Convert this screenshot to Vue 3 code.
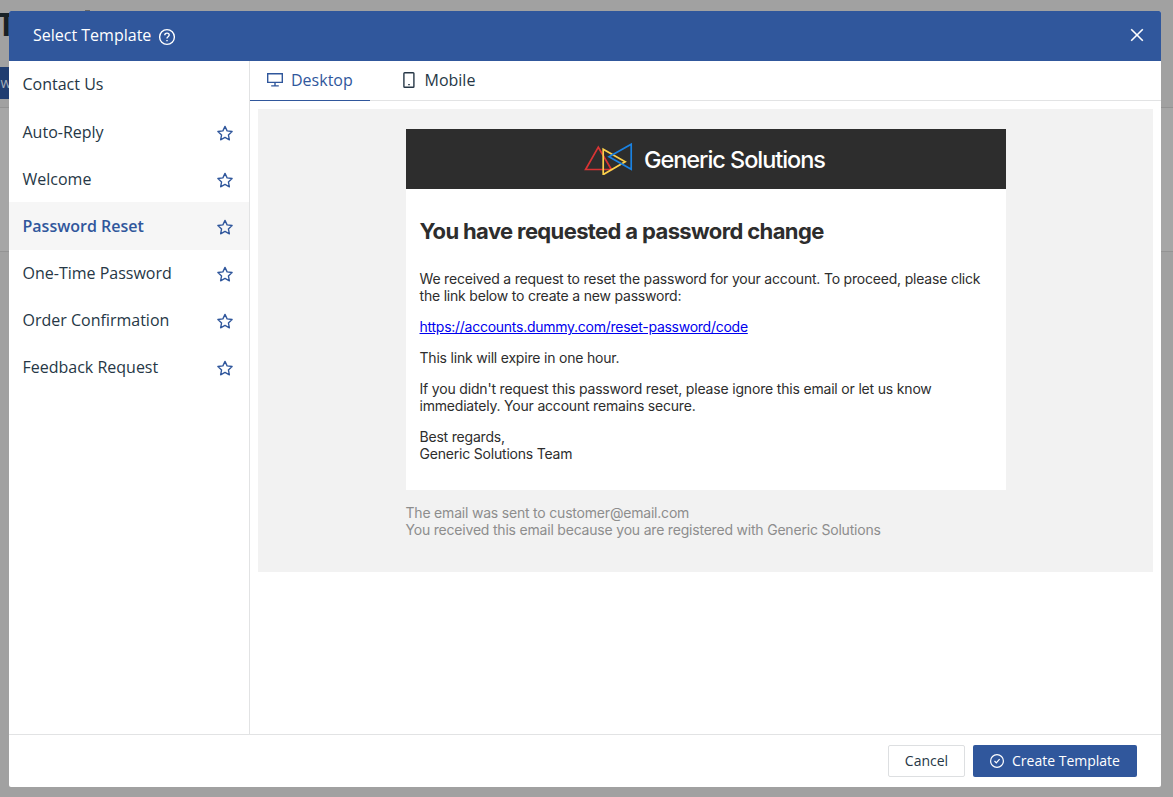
<script setup>
const templates = [
  { name: 'Contact Us', star: false },
  { name: 'Auto-Reply', star: true },
  { name: 'Welcome', star: true },
  { name: 'Password Reset', star: true, selected: true },
  { name: 'One-Time Password', star: true },
  { name: 'Order Confirmation', star: true },
  { name: 'Feedback Request', star: true },
]
</script>

<template>
  <div class="page">
    <div class="behind" aria-hidden="true">
      <div class="behind-title">T</div>
      <div class="behind-mark"></div>
      <div class="behind-tab">ow</div>
      <div class="behind-panel"></div>
    </div>
    <section class="dialog">
      <header class="head">
        <span class="head-title">Select Template</span>
        <svg class="help" width="18" height="18" viewBox="0 0 18 18" fill="none" stroke="currentColor" stroke-width="1.4">
          <circle cx="9" cy="9" r="7.4" />
          <path d="M6.8 7.2C6.8 5.8 7.8 5.1 9 5.1s2.2.8 2.2 2c0 1.6-2.2 1.7-2.2 3.3" />
          <path d="M9 11.9v1.4" />
        </svg>
        <svg class="close" width="14" height="14" viewBox="0 0 14 14" fill="none" stroke="currentColor" stroke-width="1.6">
          <path d="M1.2 1.2l11.6 11.6M12.8 1.2L1.2 12.8" />
        </svg>
      </header>
      <div class="main">
        <nav class="list">
          <div v-for="t in templates" :key="t.name" class="row" :class="{ selected: t.selected, plain: !t.star }">
            <span>{{ t.name }}</span>
            <svg v-if="t.star" class="star" width="16" height="16" viewBox="0 0 16 16" fill="none" stroke="currentColor" stroke-width="1.35" stroke-linejoin="round">
              <path d="M8 1.4l2.1 4.5 5 .6-3.7 3.4 1 4.9L8 12.4l-4.4 2.4 1-4.9L.9 6.5l5-.6z" />
            </svg>
          </div>
        </nav>
        <div class="content">
          <div class="tabs">
            <div class="tab active">
              <svg width="16" height="14" viewBox="0 0 16 14" fill="none" stroke="currentColor" stroke-width="1.4">
                <path d="M.7.7h14.6v8.7H.7zM8 9.4V13M4.2 12.9h7.6" />
              </svg>
              <span>Desktop</span>
            </div>
            <div class="tab mobile">
              <svg width="12" height="16" viewBox="0 0 12 16" fill="none" stroke="currentColor" stroke-width="1.4">
                <rect x=".9" y=".7" width="10" height="14.6" rx=".8" />
                <path d="M5.2 12.6h1.6" />
              </svg>
              <span>Mobile</span>
            </div>
          </div>
          <div class="preview">
            <div class="brand">
              <svg class="logo" width="50" height="36" viewBox="0 0 50 36" fill="none" stroke-width="1.7">
                <path stroke="#d93434" d="M14.3 8.2L27.4 30.5H1.6z" />
                <path stroke="#fcd04b" d="M19.2 10.2v25.4l22-12.8z" />
                <path stroke="#1a82e2" d="M47.2 5.2v25L25 17.8z" />
              </svg>
              <span class="brand-name">Generic Solutions</span>
            </div>
            <article class="mail">
              <h1>You have requested a password change</h1>
              <p>We received a request to reset the password for your account. To proceed, please click<br>the link below to create a new password:</p>
              <p><a>https://accounts.dummy.com/reset-password/code</a></p>
              <p>This link will expire in one hour.</p>
              <p><span class="loose">If you didn't request this password reset, please ignore this email or let us know</span><br>immediately. Your account remains secure.</p>
              <p>Best regards,<br>Generic Solutions Team</p>
            </article>
            <div class="note">The email was sent to customer@email.com<br>You received this email because you are registered with Generic Solutions</div>
          </div>
        </div>
      </div>
      <footer class="foot">
        <button class="btn cancel"><span>Cancel</span></button>
        <button class="btn create">
          <svg width="14" height="14" viewBox="0 0 14 14" fill="none" stroke="currentColor" stroke-width="1.2">
            <circle cx="7" cy="7" r="6.4" />
            <path d="M4.5 7l1.8 1.9 3.3-3.8" />
          </svg>
          <span>Create Template</span>
        </button>
      </footer>
    </section>
  </div>
</template>

<style>
body { overflow: hidden; }
</style>

<style scoped>
.page {
  position: relative;
  box-sizing: border-box;
  width: 1173px;
  height: 797px;
  padding: 11px 12px 10px 9px;
  background: #a1a1a1;
  font-family: "Open Sans", "Noto Sans", sans-serif;
  color: #263746;
  overflow: hidden;
}
.behind-title { position: absolute; left: -3px; top: 2px; font-size: 32px; font-weight: 700; line-height: 44px; color: #182126; }
.behind-mark { position: absolute; left: 85px; top: 10px; width: 5px; height: 1px; background: #666; }
.behind-tab { position: absolute; left: 0; top: 67px; width: 9px; height: 32px; overflow: hidden; background: #203d70; color: #a5adba; font-size: 14px; line-height: 32px; text-indent: -8px; }
.behind-panel { position: absolute; left: 0; top: 107px; width: 1173px; height: 145px; box-sizing: border-box; border: solid #939393; border-width: 1px 0; background: #a6a6a6; }
.dialog { position: relative; display: flex; flex-direction: column; height: 776px; background: #fff; border-radius: 2px; overflow: hidden; }
.head { display: flex; align-items: center; flex: none; height: 50px; padding: 0 17px 0 24px; background: #30579c; color: #fff; font-size: 16px; line-height: 24px; }
.head-title { margin-top: -2px; }
.help { margin: 1px 0 0 7px; }
.close { margin: -2px 0 0 auto; }
.main { display: flex; flex: 1; min-height: 0; }
.list { flex: none; width: 240px; border-right: 1px solid #e2e3e4; }
.row { display: flex; align-items: center; justify-content: space-between; height: 47px; padding: 0 16px 0 13.5px; font-size: 16px; box-sizing: border-box; }
.row.plain { padding-bottom: 2px; }
.row.selected { background: #f6f6f6; box-shadow: 0 1px #f6f6f6; color: #30579c; font-weight: 600; }
.star { color: #30579c; margin-top: 2px; }
.content { flex: 1; min-width: 0; }
.tabs { display: flex; box-sizing: border-box; height: 40px; border-bottom: 1px solid #e2e3e4; font-size: 16px; }
.tab { display: flex; align-items: center; box-sizing: border-box; height: 40px; padding: 0 17px; gap: 8px; }
.tab span { margin-top: -2px; }
.tab.active { width: 120px; color: #30579c; border-bottom: 1px solid #30579c; }
.tab.mobile { gap: 9.5px; margin-left: 16px; padding-bottom: 1px; }
.tab svg { margin-top: -1px; }
.preview { margin: 8px 8px 0; height: 463px; padding: 20px 0 0 148px; box-sizing: border-box; background: #f2f2f2; font-family: Inter, "Liberation Sans", sans-serif; font-size: 14px; line-height: 17px; letter-spacing: -.2px; color: #2d2d2d; white-space: nowrap; }
.brand { display: flex; align-items: center; width: 600px; height: 60px; box-sizing: border-box; padding-left: 178px; gap: 10px; background: #2d2d2d; color: #fff; font-size: 23.5px; line-height: 30px; }
.logo { margin-top: -4px; }
.brand-name { margin-top: 2px; font-weight: 500; letter-spacing: -1.05px; }
.mail { width: 600px; height: 301px; box-sizing: border-box; padding: 28px 13.5px; background: #fff; }
h1 { margin: 0 0 25px; font-size: 22px; line-height: 28px; font-weight: 700; letter-spacing: -.63px; }
p { margin: 0 0 14px; }
a { color: #0000ee; text-decoration: underline; letter-spacing: -.26px; }
.loose { letter-spacing: -.18px; }
.note { margin: 14px 0 0 -.5px; color: #8d8d8d; }
.foot { display: flex; align-items: center; justify-content: flex-end; gap: 8px; flex: none; height: 53px; padding-right: 24px; box-sizing: border-box; border-top: 1px solid #e2e3e4; }
.btn { display: flex; align-items: center; justify-content: center; height: 32px; padding: 0; box-sizing: border-box; border-radius: 2px; font: 14px "Open Sans", sans-serif; }
.btn span { margin-top: -2px; }
.cancel { width: 77px; border: 1px solid #dddfe1; background: #fff; color: #263746; }
.create { width: 164px; gap: 8px; border: 0; background: #30579c; color: #fff; }
</style>
